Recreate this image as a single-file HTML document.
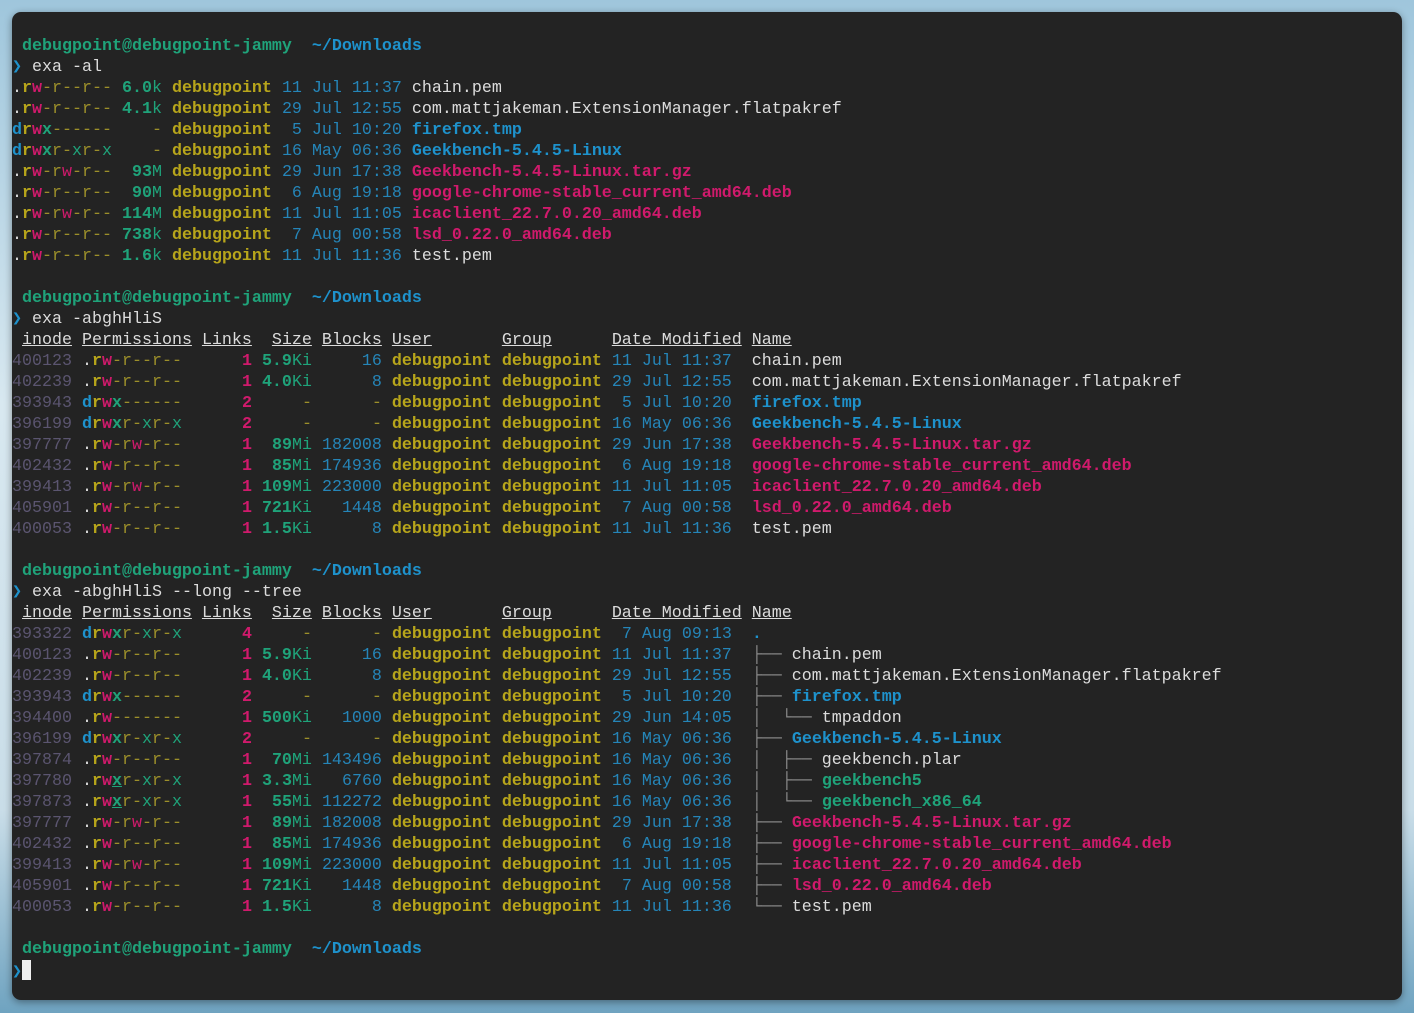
<!DOCTYPE html>
<html><head><meta charset="utf-8"><style>
html,body{margin:0;padding:0;width:1414px;height:1013px;overflow:hidden;background:linear-gradient(180deg,#9fc6dc 0%,#d8e8f0 40%,#c9dde8 80%,#6fa3c0 100%);}
.win{position:absolute;left:12px;top:12px;width:1390px;height:988px;background:#232323;border-radius:9px;box-shadow:0 2px 8px rgba(0,0,0,.4);}
pre{position:absolute;left:12px;top:36px;margin:0;font-family:"Liberation Mono","DejaVu Sans Mono",monospace;font-size:16.67px;line-height:21px;color:#dcdcdc;}
b{font-weight:bold}
i{font-style:normal}
.g{color:#1fa37a}.b{color:#1e92cc}.y{color:#b7a51b}.m{color:#d01a6c}.d{color:#2585b8}.n{color:#5b5570}.t{color:#8a8a8a}.dy{color:#9c8f2a}
u{text-decoration:underline}
.cur{display:inline-block;width:9px;height:20px;background:#f0f0f0;vertical-align:-4px}
</style></head><body><div class="win"></div>
<pre><b class="g"> debugpoint@debugpoint-jammy</b>  <b class="b">~/Downloads</b>
<b class="b">❯</b> exa -al
.<b class="y">r</b><b class="m">w</b><i class="dy">-r--r--</i> <b class="g">6.0</b><i class="g">k</i> <b class="y">debugpoint</b> <i class="d">11 Jul 11:37</i> chain.pem
.<b class="y">r</b><b class="m">w</b><i class="dy">-r--r--</i> <b class="g">4.1</b><i class="g">k</i> <b class="y">debugpoint</b> <i class="d">29 Jul 12:55</i> com.mattjakeman.ExtensionManager.flatpakref
<b class="b">d</b><b class="y">r</b><b class="m">w</b><b class="g">x</b><i class="dy">------</i>    <i class="dy">-</i> <b class="y">debugpoint</b> <i class="d"> 5 Jul 10:20</i> <b class="b">firefox.tmp</b>
<b class="b">d</b><b class="y">r</b><b class="m">w</b><b class="g">x</b><i class="dy">r-</i><i class="g">x</i><i class="dy">r-</i><i class="g">x</i>    <i class="dy">-</i> <b class="y">debugpoint</b> <i class="d">16 May 06:36</i> <b class="b">Geekbench-5.4.5-Linux</b>
.<b class="y">r</b><b class="m">w</b><i class="dy">-r</i><i class="m">w</i><i class="dy">-r--</i>  <b class="g">93</b><i class="g">M</i> <b class="y">debugpoint</b> <i class="d">29 Jun 17:38</i> <b class="m">Geekbench-5.4.5-Linux.tar.gz</b>
.<b class="y">r</b><b class="m">w</b><i class="dy">-r--r--</i>  <b class="g">90</b><i class="g">M</i> <b class="y">debugpoint</b> <i class="d"> 6 Aug 19:18</i> <b class="m">google-chrome-stable_current_amd64.deb</b>
.<b class="y">r</b><b class="m">w</b><i class="dy">-r</i><i class="m">w</i><i class="dy">-r--</i> <b class="g">114</b><i class="g">M</i> <b class="y">debugpoint</b> <i class="d">11 Jul 11:05</i> <b class="m">icaclient_22.7.0.20_amd64.deb</b>
.<b class="y">r</b><b class="m">w</b><i class="dy">-r--r--</i> <b class="g">738</b><i class="g">k</i> <b class="y">debugpoint</b> <i class="d"> 7 Aug 00:58</i> <b class="m">lsd_0.22.0_amd64.deb</b>
.<b class="y">r</b><b class="m">w</b><i class="dy">-r--r--</i> <b class="g">1.6</b><i class="g">k</i> <b class="y">debugpoint</b> <i class="d">11 Jul 11:36</i> test.pem

<b class="g"> debugpoint@debugpoint-jammy</b>  <b class="b">~/Downloads</b>
<b class="b">❯</b> exa -abghHliS
 <u>inode</u> <u>Permissions</u> <u>Links</u>  <u>Size</u> <u>Blocks</u> <u>User</u>       <u>Group</u>      <u>Date Modified</u> <u>Name</u>
<i class="n">400123</i> .<b class="y">r</b><b class="m">w</b><i class="dy">-r--r--</i>      <b class="m">1</b> <b class="g">5.9</b><i class="g">Ki</i>     <i class="d">16</i> <b class="y">debugpoint</b> <b class="y">debugpoint</b> <i class="d">11 Jul 11:37</i>  chain.pem
<i class="n">402239</i> .<b class="y">r</b><b class="m">w</b><i class="dy">-r--r--</i>      <b class="m">1</b> <b class="g">4.0</b><i class="g">Ki</i>      <i class="d">8</i> <b class="y">debugpoint</b> <b class="y">debugpoint</b> <i class="d">29 Jul 12:55</i>  com.mattjakeman.ExtensionManager.flatpakref
<i class="n">393943</i> <b class="b">d</b><b class="y">r</b><b class="m">w</b><b class="g">x</b><i class="dy">------</i>      <b class="m">2</b>     <i class="dy">-</i>      <i class="dy">-</i> <b class="y">debugpoint</b> <b class="y">debugpoint</b> <i class="d"> 5 Jul 10:20</i>  <b class="b">firefox.tmp</b>
<i class="n">396199</i> <b class="b">d</b><b class="y">r</b><b class="m">w</b><b class="g">x</b><i class="dy">r-</i><i class="g">x</i><i class="dy">r-</i><i class="g">x</i>      <b class="m">2</b>     <i class="dy">-</i>      <i class="dy">-</i> <b class="y">debugpoint</b> <b class="y">debugpoint</b> <i class="d">16 May 06:36</i>  <b class="b">Geekbench-5.4.5-Linux</b>
<i class="n">397777</i> .<b class="y">r</b><b class="m">w</b><i class="dy">-r</i><i class="m">w</i><i class="dy">-r--</i>      <b class="m">1</b>  <b class="g">89</b><i class="g">Mi</i> <i class="d">182008</i> <b class="y">debugpoint</b> <b class="y">debugpoint</b> <i class="d">29 Jun 17:38</i>  <b class="m">Geekbench-5.4.5-Linux.tar.gz</b>
<i class="n">402432</i> .<b class="y">r</b><b class="m">w</b><i class="dy">-r--r--</i>      <b class="m">1</b>  <b class="g">85</b><i class="g">Mi</i> <i class="d">174936</i> <b class="y">debugpoint</b> <b class="y">debugpoint</b> <i class="d"> 6 Aug 19:18</i>  <b class="m">google-chrome-stable_current_amd64.deb</b>
<i class="n">399413</i> .<b class="y">r</b><b class="m">w</b><i class="dy">-r</i><i class="m">w</i><i class="dy">-r--</i>      <b class="m">1</b> <b class="g">109</b><i class="g">Mi</i> <i class="d">223000</i> <b class="y">debugpoint</b> <b class="y">debugpoint</b> <i class="d">11 Jul 11:05</i>  <b class="m">icaclient_22.7.0.20_amd64.deb</b>
<i class="n">405901</i> .<b class="y">r</b><b class="m">w</b><i class="dy">-r--r--</i>      <b class="m">1</b> <b class="g">721</b><i class="g">Ki</i>   <i class="d">1448</i> <b class="y">debugpoint</b> <b class="y">debugpoint</b> <i class="d"> 7 Aug 00:58</i>  <b class="m">lsd_0.22.0_amd64.deb</b>
<i class="n">400053</i> .<b class="y">r</b><b class="m">w</b><i class="dy">-r--r--</i>      <b class="m">1</b> <b class="g">1.5</b><i class="g">Ki</i>      <i class="d">8</i> <b class="y">debugpoint</b> <b class="y">debugpoint</b> <i class="d">11 Jul 11:36</i>  test.pem

<b class="g"> debugpoint@debugpoint-jammy</b>  <b class="b">~/Downloads</b>
<b class="b">❯</b> exa -abghHliS --long --tree
 <u>inode</u> <u>Permissions</u> <u>Links</u>  <u>Size</u> <u>Blocks</u> <u>User</u>       <u>Group</u>      <u>Date Modified</u> <u>Name</u>
<i class="n">393322</i> <b class="b">d</b><b class="y">r</b><b class="m">w</b><b class="g">x</b><i class="dy">r-</i><i class="g">x</i><i class="dy">r-</i><i class="g">x</i>      <b class="m">4</b>     <i class="dy">-</i>      <i class="dy">-</i> <b class="y">debugpoint</b> <b class="y">debugpoint</b> <i class="d"> 7 Aug 09:13</i>  <b class="b">.</b>
<i class="n">400123</i> .<b class="y">r</b><b class="m">w</b><i class="dy">-r--r--</i>      <b class="m">1</b> <b class="g">5.9</b><i class="g">Ki</i>     <i class="d">16</i> <b class="y">debugpoint</b> <b class="y">debugpoint</b> <i class="d">11 Jul 11:37</i>  <i class="t">├──</i> chain.pem
<i class="n">402239</i> .<b class="y">r</b><b class="m">w</b><i class="dy">-r--r--</i>      <b class="m">1</b> <b class="g">4.0</b><i class="g">Ki</i>      <i class="d">8</i> <b class="y">debugpoint</b> <b class="y">debugpoint</b> <i class="d">29 Jul 12:55</i>  <i class="t">├──</i> com.mattjakeman.ExtensionManager.flatpakref
<i class="n">393943</i> <b class="b">d</b><b class="y">r</b><b class="m">w</b><b class="g">x</b><i class="dy">------</i>      <b class="m">2</b>     <i class="dy">-</i>      <i class="dy">-</i> <b class="y">debugpoint</b> <b class="y">debugpoint</b> <i class="d"> 5 Jul 10:20</i>  <i class="t">├──</i> <b class="b">firefox.tmp</b>
<i class="n">394400</i> .<b class="y">r</b><b class="m">w</b><i class="dy">-------</i>      <b class="m">1</b> <b class="g">500</b><i class="g">Ki</i>   <i class="d">1000</i> <b class="y">debugpoint</b> <b class="y">debugpoint</b> <i class="d">29 Jun 14:05</i>  <i class="t">│  └──</i> tmpaddon
<i class="n">396199</i> <b class="b">d</b><b class="y">r</b><b class="m">w</b><b class="g">x</b><i class="dy">r-</i><i class="g">x</i><i class="dy">r-</i><i class="g">x</i>      <b class="m">2</b>     <i class="dy">-</i>      <i class="dy">-</i> <b class="y">debugpoint</b> <b class="y">debugpoint</b> <i class="d">16 May 06:36</i>  <i class="t">├──</i> <b class="b">Geekbench-5.4.5-Linux</b>
<i class="n">397874</i> .<b class="y">r</b><b class="m">w</b><i class="dy">-r--r--</i>      <b class="m">1</b>  <b class="g">70</b><i class="g">Mi</i> <i class="d">143496</i> <b class="y">debugpoint</b> <b class="y">debugpoint</b> <i class="d">16 May 06:36</i>  <i class="t">│  ├──</i> geekbench.plar
<i class="n">397780</i> .<b class="y">r</b><b class="m">w</b><b class="g"><u>x</u></b><i class="dy">r-</i><i class="g">x</i><i class="dy">r-</i><i class="g">x</i>      <b class="m">1</b> <b class="g">3.3</b><i class="g">Mi</i>   <i class="d">6760</i> <b class="y">debugpoint</b> <b class="y">debugpoint</b> <i class="d">16 May 06:36</i>  <i class="t">│  ├──</i> <b class="g">geekbench5</b>
<i class="n">397873</i> .<b class="y">r</b><b class="m">w</b><b class="g"><u>x</u></b><i class="dy">r-</i><i class="g">x</i><i class="dy">r-</i><i class="g">x</i>      <b class="m">1</b>  <b class="g">55</b><i class="g">Mi</i> <i class="d">112272</i> <b class="y">debugpoint</b> <b class="y">debugpoint</b> <i class="d">16 May 06:36</i>  <i class="t">│  └──</i> <b class="g">geekbench_x86_64</b>
<i class="n">397777</i> .<b class="y">r</b><b class="m">w</b><i class="dy">-r</i><i class="m">w</i><i class="dy">-r--</i>      <b class="m">1</b>  <b class="g">89</b><i class="g">Mi</i> <i class="d">182008</i> <b class="y">debugpoint</b> <b class="y">debugpoint</b> <i class="d">29 Jun 17:38</i>  <i class="t">├──</i> <b class="m">Geekbench-5.4.5-Linux.tar.gz</b>
<i class="n">402432</i> .<b class="y">r</b><b class="m">w</b><i class="dy">-r--r--</i>      <b class="m">1</b>  <b class="g">85</b><i class="g">Mi</i> <i class="d">174936</i> <b class="y">debugpoint</b> <b class="y">debugpoint</b> <i class="d"> 6 Aug 19:18</i>  <i class="t">├──</i> <b class="m">google-chrome-stable_current_amd64.deb</b>
<i class="n">399413</i> .<b class="y">r</b><b class="m">w</b><i class="dy">-r</i><i class="m">w</i><i class="dy">-r--</i>      <b class="m">1</b> <b class="g">109</b><i class="g">Mi</i> <i class="d">223000</i> <b class="y">debugpoint</b> <b class="y">debugpoint</b> <i class="d">11 Jul 11:05</i>  <i class="t">├──</i> <b class="m">icaclient_22.7.0.20_amd64.deb</b>
<i class="n">405901</i> .<b class="y">r</b><b class="m">w</b><i class="dy">-r--r--</i>      <b class="m">1</b> <b class="g">721</b><i class="g">Ki</i>   <i class="d">1448</i> <b class="y">debugpoint</b> <b class="y">debugpoint</b> <i class="d"> 7 Aug 00:58</i>  <i class="t">├──</i> <b class="m">lsd_0.22.0_amd64.deb</b>
<i class="n">400053</i> .<b class="y">r</b><b class="m">w</b><i class="dy">-r--r--</i>      <b class="m">1</b> <b class="g">1.5</b><i class="g">Ki</i>      <i class="d">8</i> <b class="y">debugpoint</b> <b class="y">debugpoint</b> <i class="d">11 Jul 11:36</i>  <i class="t">└──</i> test.pem

<b class="g"> debugpoint@debugpoint-jammy</b>  <b class="b">~/Downloads</b>
<b class="b">❯</b><span class="cur"></span></pre>
</body></html>
